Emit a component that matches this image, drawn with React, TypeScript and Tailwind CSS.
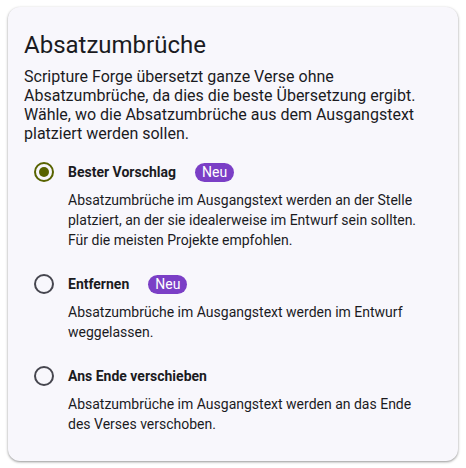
import React, { useState } from 'react';

type Option = {
  id: string;
  label: string;
  isNew: boolean;
  description: string;
};

const options: Option[] = [
  {
    id: 'best',
    label: 'Bester Vorschlag',
    isNew: true,
    description:
      'Absatzumbrüche im Ausgangstext werden an der Stelle platziert, an der sie idealerweise im Entwurf sein sollten. Für die meisten Projekte empfohlen.',
  },
  {
    id: 'remove',
    label: 'Entfernen',
    isNew: true,
    description: 'Absatzumbrüche im Ausgangstext werden im Entwurf weggelassen.',
  },
  {
    id: 'end',
    label: 'Ans Ende verschieben',
    isNew: false,
    description: 'Absatzumbrüche im Ausgangstext werden an das Ende des Verses verschoben.',
  },
];

const Radio: React.FC<{ checked: boolean }> = ({ checked }) => (
  <span className="flex h-10 w-10 items-center justify-center">
    <span
      className={`flex h-5 w-5 items-center justify-center rounded-full border-2 ${
        checked ? 'border-[#586300]' : 'border-[#46464f]'
      }`}
    >
      {checked && <span className="h-2.5 w-2.5 rounded-full bg-[#586300]" />}
    </span>
  </span>
);

export default function App() {
  const [selected, setSelected] = useState('best');

  return (
    <div className="min-h-screen bg-white pl-2 pr-2 pt-[7px] font-['Roboto',sans-serif] text-[#1b1b1f]">
      <div className="w-[450px] rounded-xl bg-[#f8f7fc] px-4 pb-[27px] pt-[22px] shadow-[0_1px_3px_rgba(0,0,0,0.3),0_1px_2px_rgba(0,0,0,0.15)]">
        <h2 className="text-2xl leading-8">Absatzumbrüche</h2>
        <p className="mt-[6px] text-base leading-[19px]">
          Scripture Forge übersetzt ganze Verse ohne Absatzumbrüche, da dies die beste Übersetzung
          ergibt. Wähle, wo die Absatzumbrüche aus dem Ausgangstext platziert werden sollen.
        </p>
        <div className="mt-[9px] flex flex-col gap-[14px]">
          {options.map((opt) => (
            <div key={opt.id} className="cursor-pointer" onClick={() => setSelected(opt.id)}>
              <div className="flex h-10 items-center">
                <Radio checked={selected === opt.id} />
                <span className="pl-1 text-sm font-bold">{opt.label}</span>
                {opt.isNew && (
                  <span className="ml-[19px] rounded-full bg-[#7b3fc6] px-[7px] text-sm leading-[19px] text-white">
                    Neu
                  </span>
                )}
              </div>
              <p className="-mt-[2px] pl-11 pr-2 text-sm leading-5">{opt.description}</p>
            </div>
          ))}
        </div>
      </div>
    </div>
  );
}
